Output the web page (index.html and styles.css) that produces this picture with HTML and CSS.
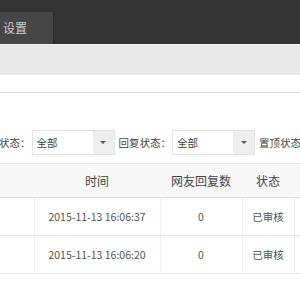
FILE: index.html
```html
<!DOCTYPE html>
<html lang="zh-CN">
<head>
<meta charset="utf-8">
<link rel="stylesheet" href="styles.css">
</head>
<body>
<header class="topbar">
  <nav class="tabs">
    <a class="tab active">设置</a>
  </nav>
</header>
<div class="subbar"></div>
<main class="panel">
  <div class="filters">
    <span class="label">状态：</span>
    <div class="select"><span class="value">全部</span><span class="btn"><i class="caret"></i></span></div>
    <span class="label">回复状态：</span>
    <div class="select"><span class="value">全部</span><span class="btn"><i class="caret"></i></span></div>
    <span class="label">置顶状态</span>
  </div>
  <table class="grid">
    <colgroup>
      <col class="c0"><col class="c1"><col class="c2"><col class="c3"><col class="c4">
    </colgroup>
    <thead>
      <tr><th></th><th>时间</th><th>网友回复数</th><th>状态</th><th></th></tr>
    </thead>
    <tbody>
      <tr><td></td><td>2015-11-13 16:06:37</td><td>0</td><td>已审核</td><td></td></tr>
      <tr><td></td><td>2015-11-13 16:06:20</td><td>0</td><td>已审核</td><td></td></tr>
    </tbody>
  </table>
</main>
</body>
</html>
```
FILE: styles.css
```css
html, body {
  margin: 0;
  padding: 0;
  background: #fff;
  overflow: hidden;
  font-family: "Noto Sans CJK SC", "Noto Sans", sans-serif;
}
.topbar {
  height: 44px;
  background: #333333;
  display: flex;
  align-items: flex-end;
}
.tabs {
  display: flex;
}
.tab {
  display: block;
  height: 32px;
  line-height: 32px;
  padding: 0 26px 0 3px;
  background: #464646;
  border-right: 1px solid #2b2b2b;
  color: #d0d0d0;
  font-size: 12px;
}
.subbar {
  height: 30px;
  background: #e8e8e8;
  border-top: 1px solid #f4f4f4;
}
.panel {
  border-top: 1px solid #dcdcdc;
  margin-top: 17px;
  padding-top: 37px;
}
.filters {
  display: flex;
  align-items: center;
  height: 25px;
  margin-left: -1px;
  white-space: nowrap;
}
.label {
  font-size: 10.5px;
  color: #444;
  margin-right: 1px;
}
.select {
  display: flex;
  height: 25px;
  box-sizing: border-box;
  border: 1px solid #e2e2e2;
  margin-right: 4px;
}
.select .value {
  width: 60px;
  padding-left: 4px;
  box-sizing: border-box;
  line-height: 23px;
  font-size: 10.5px;
  color: #444;
}
.select .btn {
  width: 21px;
  background: #eeeeee;
  display: flex;
  align-items: center;
  justify-content: center;
}
.caret {
  width: 0;
  height: 0;
  border-left: 3px solid transparent;
  border-right: 3px solid transparent;
  border-top: 3px solid #555;
}
.grid {
  margin-top: 8px;
  border-collapse: collapse;
  table-layout: fixed;
  width: 320px;
}
.c0 { width: 34px; }
.c1 { width: 126px; }
.c2 { width: 82px; }
.c3 { width: 52px; }
.c4 { width: 26px; }
.grid th {
  height: 33px;
  background: #f8f8f8;
  border-top: 1px solid #e3e3e3;
  border-bottom: 1px solid #e3e3e3;
  font-weight: normal;
  font-size: 12px;
  color: #444;
  padding: 0;
  text-align: center;
}
.grid td {
  height: 37px;
  border-bottom: 1px solid #e6e6e6;
  border-left: 1px solid #f0f0f0;
  font-size: 10.5px;
  color: #555;
  padding: 0;
  text-align: center;
}
.grid td:first-child { border-left: none; }
```
